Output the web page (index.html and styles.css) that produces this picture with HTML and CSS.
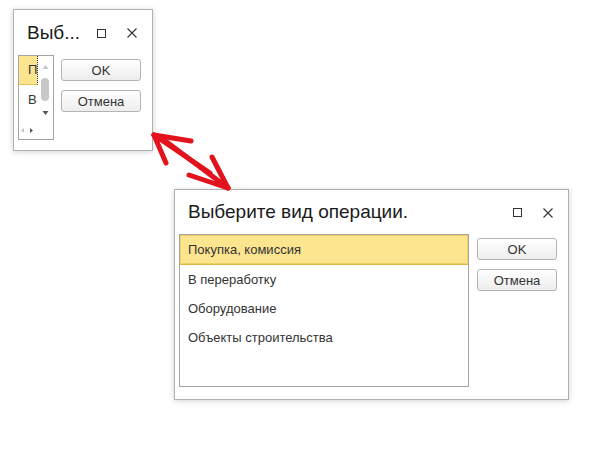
FILE: index.html
```html
<!DOCTYPE html>
<html lang="ru">
<head>
<meta charset="utf-8">
<title>Выберите вид операции</title>
<link rel="stylesheet" href="styles.css">
</head>
<body>
<div class="desk">
  <div class="dlg dlg-small">
    <div class="hdr">
      <div class="title">Выб...</div>
      <span class="ico-max"></span>
      <svg class="ico-close" width="10" height="10" viewBox="0 0 10 10"><path d="M0.5 0.5 L9.5 9.5 M9.5 0.5 L0.5 9.5" stroke="#333" stroke-width="1.1" fill="none"/></svg>
    </div>
    <div class="body">
      <div class="slist">
        <div class="sview">
          <div class="item sel focus">Покупка, комиссия</div>
          <div class="item">В переработку</div>
          <div class="item">Оборудование</div>
        </div>
        <svg class="vbar" width="15" height="67" viewBox="0 0 15 67">
          <polygon points="4.5,13 7.5,9 10.5,13" fill="#c6c6c6"/>
          <rect x="3" y="22" width="8" height="23" rx="4" fill="#c8c8c8"/>
          <polygon points="4.5,55 10.5,55 7.5,59" fill="#555"/>
        </svg>
        <svg class="hbar" width="19" height="16" viewBox="0 0 19 16">
          <polygon points="5,5 2,7.5 5,10" fill="#c6c6c6"/>
          <polygon points="11,5 14,7.5 11,10" fill="#555"/>
        </svg>
      </div>
      <div class="btns">
        <button class="btn">OK</button>
        <button class="btn">Отмена</button>
      </div>
    </div>
  </div>

  <div class="dlg dlg-large">
    <div class="hdr">
      <div class="title">Выберите вид операции.</div>
      <span class="ico-max"></span>
      <svg class="ico-close" width="10" height="10" viewBox="0 0 10 10"><path d="M0.5 0.5 L9.5 9.5 M9.5 0.5 L0.5 9.5" stroke="#333" stroke-width="1.1" fill="none"/></svg>
    </div>
    <div class="body">
      <div class="list">
        <div class="item sel">Покупка, комиссия</div>
        <div class="item">В переработку</div>
        <div class="item">Оборудование</div>
        <div class="item">Объекты строительства</div>
      </div>
      <div class="btns">
        <button class="btn">OK</button>
        <button class="btn">Отмена</button>
      </div>
    </div>
  </div>

  <svg class="arrow" width="613" height="468" viewBox="0 0 613 468">
    <g stroke="#e3121c" stroke-width="5" stroke-linecap="round" stroke-linejoin="round" fill="none">
      <path d="M154 135 L191 141"/>
      <path d="M154 135 L166 163"/>
      <path d="M154 135 L210 173"/>
      <path d="M160 137 L228 188"/>
      <path d="M212 157 L228 188"/>
      <path d="M189 175 L228 188"/>
    </g>
  </svg>
</div>
</body>
</html>
```

FILE: styles.css
```css
* { box-sizing: border-box; }
html, body { margin: 0; padding: 0; background: #fff; }
body {
  font-family: "Liberation Sans", Arial, sans-serif;
  color: #333;
}
.desk {
  position: relative;
  width: 613px;
  height: 468px;
  overflow: hidden;
}
.dlg {
  position: absolute;
  background: #fff;
  border: 1px solid #b0b0b0;
  box-shadow: 0 1px 6px rgba(0, 0, 0, 0.18);
  display: flex;
  flex-direction: column;
}
.dlg-small { left: 13px; top: 9px; width: 140px; height: 142px; }
.dlg-large { left: 174px; top: 189px; width: 395px; height: 211px; }

.hdr {
  display: flex;
  align-items: center;
  padding: 0 15px 0 13px;
  height: 44px;
}
.dlg-small .hdr { height: 45px; }
.title {
  flex: 1;
  font-size: 19px;
  line-height: 20px;
  color: #1a1a1a;
  white-space: nowrap;
}
.ico-max {
  width: 9px;
  height: 9px;
  border: 1px solid #333;
  margin-right: 21px;
  margin-top: 1px;
}
.ico-close { display: block; margin-top: 1px; }

.body {
  display: flex;
  align-items: flex-start;
  padding: 0 11px 0 4px;
  gap: 8px;
}
.dlg-small .body { padding-left: 4px; gap: 7px; }

.list {
  width: 290px;
  height: 153px;
  border: 1px solid #a4a4a4;
  overflow: hidden;
}
.item {
  height: 29px;
  line-height: 29px;
  font-size: 13px;
  padding-left: 8px;
  white-space: nowrap;
  color: #333;
}
.list .item.sel {
  margin: -1px -1px 0 -1px;
  height: 31px;
  line-height: 29px;
  padding-left: 8px;
  background: #fde590;
  border: 1px solid #dfb843;
  box-shadow: inset 0 0 0 1px #f0cf63;
}

.slist {
  width: 36px;
  height: 85px;
  border: 1px solid #a4a4a4;
  display: grid;
  grid-template-columns: 19px 15px;
  grid-template-rows: 67px 16px;
}
.sview {
  overflow: hidden;
  width: 19px;
  height: 67px;
}
.sview .item {
  padding-left: 9px;
  overflow: hidden;
  text-overflow: clip;
}
.sview .item.sel {
  background: #fde590;
  border-bottom: 1px solid #e5c04a;
  border-right: 1px dotted #333;
  line-height: 28px;
}
.vbar { grid-column: 2; grid-row: 1; display: block; }
.hbar { grid-column: 1; grid-row: 2; display: block; }

.btns {
  display: flex;
  flex-direction: column;
  gap: 9px;
  padding-top: 4px;
}
.btn {
  width: 80px;
  height: 22px;
  padding: 0;
  font-family: "Liberation Sans", Arial, sans-serif;
  font-size: 13px;
  color: #333;
  background: linear-gradient(#ffffff, #ededed);
  border: 1px solid #b4b4b4;
  border-radius: 3px;
}

.arrow {
  position: absolute;
  left: 0;
  top: 0;
  pointer-events: none;
}
```
